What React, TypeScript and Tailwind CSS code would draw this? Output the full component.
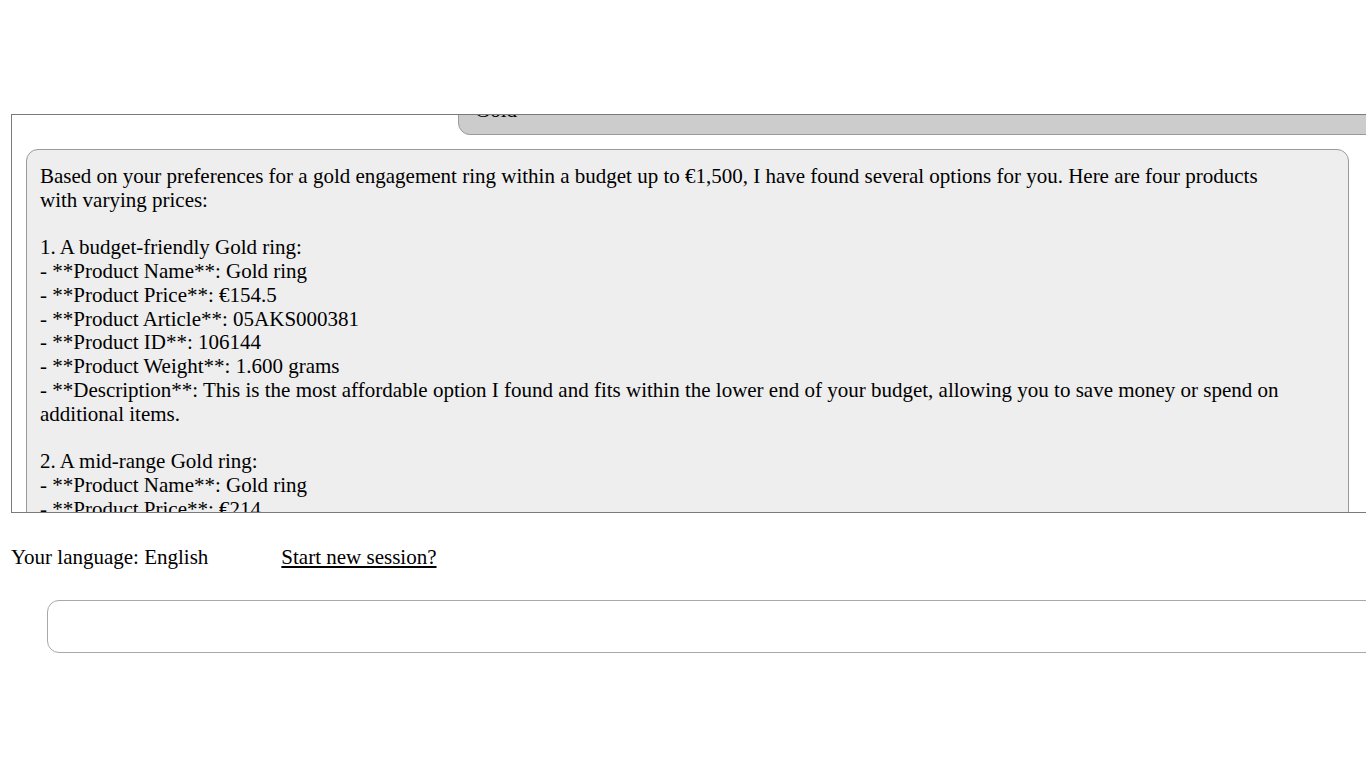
const reply = `Based on your preferences for a gold engagement ring within a budget up to €1,500, I have found several options for you. Here are four products with varying prices:

1. A budget-friendly Gold ring:
- **Product Name**: Gold ring
- **Product Price**: €154.5
- **Product Article**: 05AKS000381
- **Product ID**: 106144
- **Product Weight**: 1.600 grams
- **Description**: This is the most affordable option I found and fits within the lower end of your budget, allowing you to save money or spend on additional items.

2. A mid-range Gold ring:
- **Product Name**: Gold ring
- **Product Price**: €214
- **Product Article**: 05AKS000412
- **Product ID**: 106187
- **Product Weight**: 2.100 grams`;

export default function App() {
	return (
		<div
			className="w-screen h-screen overflow-hidden bg-white text-black pt-[114px] pl-[11px] text-[21px] leading-[23.75px]"
			style={{ fontFamily: '"Liberation Serif", "Times New Roman", serif' }}
		>
			{/* chat log, scrolled to the latest answer */}
			<div className="w-[1420px] h-[399px] border border-[#7a7a7a] overflow-hidden">
				<div className="flex flex-col -mt-[44px]">
					<div className="ml-[446px] h-[64px] bg-[#cccccc] border border-[#9a9a9a] rounded-[12px] px-[16px] pt-[27px]">
						Gold
					</div>
					<div className="mt-[14px] ml-[14px] w-[1323px] bg-[#eeeeee] border border-[#9a9a9a] rounded-[12px] pl-[13px] pr-[48px] pt-[15px] pb-[14px] whitespace-pre-line">
						{reply}
					</div>
				</div>
			</div>

			{/* footer */}
			<div className="flex items-center mt-[33px] h-[24px]">
				<span>Your language: English</span>
				<a href="#" className="ml-[73px] underline text-black">
					Start new session?
				</a>
			</div>

			<div className="mt-[30px] ml-[36px] w-[1400px] h-[53px] border border-[#a8a8a8] rounded-[12px] bg-white" />
		</div>
	);
}
